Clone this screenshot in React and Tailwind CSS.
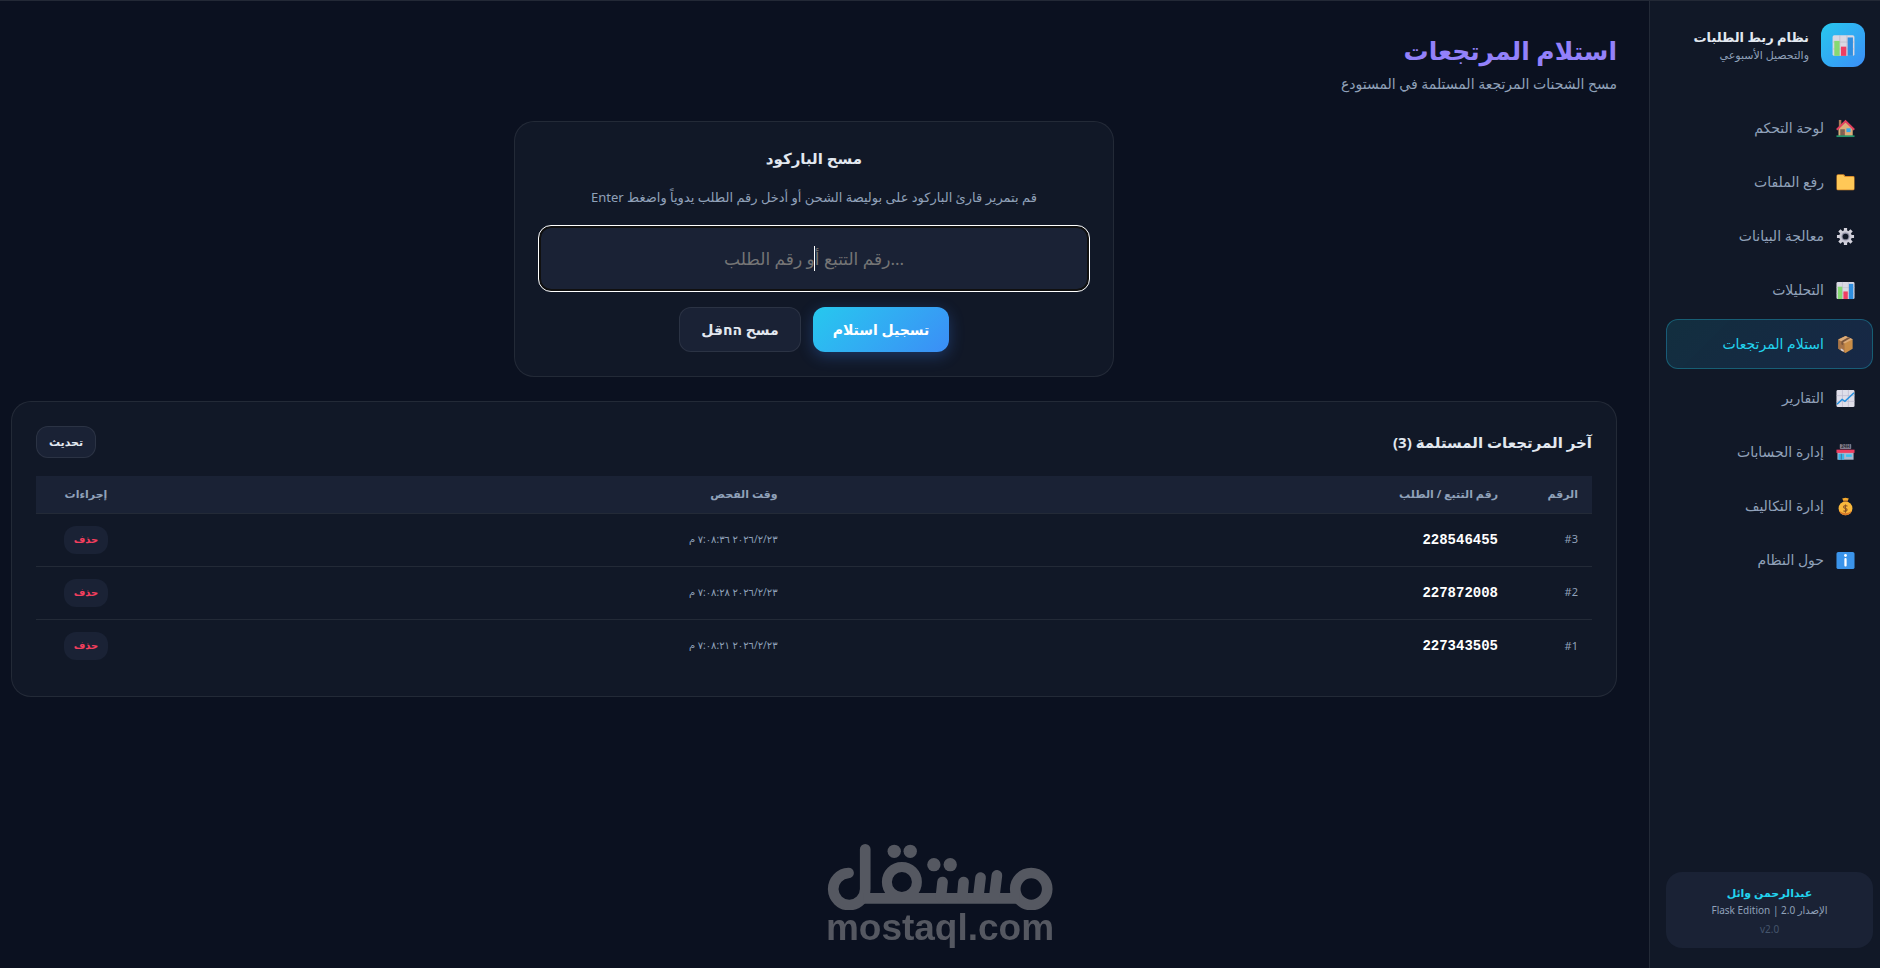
import React, { useState } from "react";

const scans = [
  { id: 3, code: "228546455", time: "٢٣‏/٢‏/٢٠٢٦ ٧:٠٨:٣٦ م" },
  { id: 2, code: "227872008", time: "٢٣‏/٢‏/٢٠٢٦ ٧:٠٨:٢٨ م" },
  { id: 1, code: "227343505", time: "٢٣‏/٢‏/٢٠٢٦ ٧:٠٨:٢١ م" },
];

function Icon({ children, className = "size-[19px]" }) {
  return (
    <svg viewBox="0 0 20 20" className={`${className} shrink-0`} aria-hidden="true">
      {children}
    </svg>
  );
}

function ChartIcon({ className }) {
  return (
    <Icon className={className}>
      <rect x="0.5" y="1" width="19" height="18" rx="1.5" fill="#d9d8e3" />
      <path d="M6.8 1v18M13 1v18M.5 7h19M.5 13h19" stroke="#bab8c9" strokeWidth="0.6" />
      <rect x="2" y="6" width="4.6" height="13" fill="#86d972" />
      <rect x="7.8" y="11" width="4.6" height="8" fill="#ef3e63" />
      <rect x="13.6" y="3" width="4.6" height="16" fill="#2f8fe0" />
    </Icon>
  );
}

function HouseIcon() {
  return (
    <Icon>
      <rect x="3" y="1" width="2.6" height="7" fill="#a97b55" />
      <path d="M2.6 10 10 3.2 17.6 10V18H2.6z" fill="#dcae7a" />
      <path d="M.8 11.3 10 2.2l9.2 9.1" fill="none" stroke="#e33f5f" strokeWidth="2.1" />
      <rect x="4.5" y="10.8" width="4.8" height="7.2" fill="#7c6353" />
      <rect x="11" y="9.8" width="4.4" height="4" fill="#35a9ea" />
      <rect x="0.5" y="17.2" width="19" height="1.8" fill="#23936b" />
      <circle cx="8.3" cy="14.5" r="0.6" fill="#e9434f" />
    </Icon>
  );
}

function FolderIcon() {
  return (
    <Icon>
      <path d="M.5 3q0-1.8 1.6-1.8h5.6q1 0 1.6 1.2l.4.7H18q1.5 0 1.5 1.5v12q0 1.6-1.5 1.6H2q-1.5 0-1.5-1.6z" fill="#d98b2b" />
      <path d="M1 3.4q0-1.2 1.2-1.2h5.3l1.6 2H18q1 0 1 1v11q0 1.2-1.2 1.2H2.2Q1 17.4 1 16.2z" fill="#ffc857" />
    </Icon>
  );
}

function GearIcon() {
  return (
    <Icon>
      <path d="M10 1v18M1 10h18M3.6 3.6l12.8 12.8M16.4 3.6 3.6 16.4" stroke="#d3d2dc" strokeWidth="3.4" />
      <circle cx="10" cy="10" r="6.6" fill="#cbcad6" />
      <circle cx="10" cy="10" r="4.2" fill="#8f8fa4" />
      <circle cx="10" cy="10" r="3" fill="#111827" />
    </Icon>
  );
}

function BoxIcon() {
  return (
    <Icon>
      <path d="M10 1 17.5 4.5v10L10 19l-7.5-4.5v-10z" fill="#c98d47" />
      <path d="M10 1 17.5 4.5 9 9 2.5 5z" fill="#dcab78" />
      <path d="M2.5 5 9 9v9.4l-6.5-3.9z" fill="#a87447" />
      <path d="M12.8 2.3 5.6 6.6v3.2l2 1.1V7.7l7.3-4.3z" fill="#7b563b" />
      <path d="m5 14 3 1.7v2L5 16z" fill="#d8d5df" />
    </Icon>
  );
}

function TrendIcon() {
  return (
    <Icon>
      <rect x="0.5" y="1" width="19" height="18" rx="1.5" fill="#dfdee9" />
      <path d="M6.8 1v18M13 1v18M.5 7h19M.5 13h19" stroke="#b9b7cb" strokeWidth="0.7" />
      <path d="M1 16 6.4 11l3 2L19 4" fill="none" stroke="#2590df" strokeWidth="1.6" />
    </Icon>
  );
}

function StoreIcon() {
  return (
    <Icon>
      <rect x="4" y="1" width="12" height="5.4" rx="0.8" fill="#7d7b8c" />
      <text x="10" y="5.3" textAnchor="middle" fill="#26262f" className="font-['Liberation_Sans'] text-[5px] font-bold">24H</text>
      <rect x="1.5" y="9" width="17" height="8.6" fill="#a9b7cc" />
      <rect x="0.5" y="7" width="19" height="3.4" fill="#ee3d60" />
      <rect x="2.6" y="11.4" width="6" height="6.2" fill="#38b3e8" />
      <path d="M5.6 11.4v6.200" stroke="#53607a" strokeWidth="0.8" />
      <rect x="10.6" y="12" width="6" height="2.6" fill="#38c0f0" />
    </Icon>
  );
}

function MoneyIcon() {
  return (
    <Icon>
      <path d="M6.5 1.5 10 .8l3.5.7-1.6 3.2H8.1z" fill="#f5a92e" />
      <circle cx="10" cy="12" r="7.3" fill="#fab83c" />
      <path d="M3.2 14.5a7.3 7.3 0 0 0 13.6 0q-3 2.500-6.800 2.500t-6.800-2.500" fill="#d97a2a" />
      <rect x="7.500" y="3.600" width="5" height="1.400" rx="0.700" fill="#a4612a" />
      <path d="M12 9.700q-2-1.200-3.400-.2t.2 2.200l2 .7q1.600.9.300 2.100-1.500 1-3.300-.1M10 8v8.500" fill="none" stroke="#8a5426" strokeWidth="1.100" />
    </Icon>
  );
}

function InfoIcon() {
  return (
    <Icon>
      <rect x="0.5" y="1" width="19" height="18" rx="2" fill="#3b94ea" />
      <circle cx="10" cy="4.7" r="1.5" fill="#fff" />
      <rect x="8.8" y="7.3" width="2.4" height="9" rx="1" fill="#fff" />
    </Icon>
  );
}

const navItems = [
  { label: "لوحة التحكم", icon: HouseIcon },
  { label: "رفع الملفات", icon: FolderIcon },
  { label: "معالجة البيانات", icon: GearIcon },
  { label: "التحليلات", icon: ChartIcon },
  { label: "استلام المرتجعات", icon: BoxIcon, active: true },
  { label: "التقارير", icon: TrendIcon },
  { label: "إدارة الحسابات", icon: StoreIcon },
  { label: "إدارة التكاليف", icon: MoneyIcon },
  { label: "حول النظام", icon: InfoIcon },
];

function Sidebar() {
  return (
    <aside className="flex w-[231px] shrink-0 flex-col border-l border-white/8 bg-[#111827] pt-[22px] pr-[7px] pb-5 pl-4">
      <div className="flex items-center gap-3 pr-2">
        <div className="flex size-11 items-center justify-center rounded-xl bg-linear-135 from-[#26c8ee] to-[#3b8df6]">
          <ChartIcon className="size-[23px]" />
        </div>
        <div>
          <div className="text-[13px] leading-5 font-bold text-slate-200">نظام ربط الطلبات</div>
          <div className="text-[11px] leading-4 text-slate-400">والتحصيل الأسبوعي</div>
        </div>
      </div>

      <nav className="mt-9 flex flex-col gap-1">
        {navItems.map(({ label, icon: NavIcon, active }) => (
          <a
            key={label}
            href="#"
            className={`flex h-[50px] items-center gap-3 rounded-xl border px-[17px] text-sm ${
              active
                ? "border-[#22d3ee]/30 bg-linear-135 from-[#22d3ee]/12 to-[#3b82f6]/15 text-[#22d3ee]"
                : "border-transparent text-slate-400"
            }`}
          >
            <NavIcon />
            {label}
          </a>
        ))}
      </nav>

      <div className="mt-auto flex h-[76px] flex-col items-center justify-center rounded-2xl bg-[#1a2235] text-[10px]">
        <div className="text-[11px] leading-5 font-bold text-[#22d3ee]">عبدالرحمن وائل</div>
        <div className="leading-[14px] text-slate-400">الإصدار 2.0 | Flask Edition</div>
        <div className="mt-1 leading-4 text-slate-600">v2.0</div>
      </div>
    </aside>
  );
}

function ScanCard() {
  const [code, setCode] = useState("");

  return (
    <section className="mx-auto w-full max-w-[600px] rounded-[20px] border border-white/8 bg-[#111827] p-6 text-center">
      <h2 className="text-[15px] leading-6 font-bold text-slate-200">مسح الباركود</h2>
      <label htmlFor="barcode" className="mt-4 block text-[13px] leading-[22px] text-slate-400">
        قم بتمرير قارئ الباركود على بوليصة الشحن أو أدخل رقم الطلب يدوياً واضغط Enter
      </label>
      <div className="relative mt-[18px]">
        <input
          id="barcode"
          dir="ltr"
          value={code}
          onChange={(e) => setCode(e.target.value)}
          placeholder="رقم التتبع أو رقم الطلب..."
          className="block h-[65px] w-full rounded-xl border-2 border-[#101010] bg-[#1a2235] text-center text-[17px] text-slate-100 caret-transparent outline-1 outline-white placeholder:text-[#757575]"
        />
        <span className="absolute top-5 left-1/2 h-[25px] w-px bg-white" />
      </div>
      <div className="mt-4 flex justify-center gap-3 text-sm font-bold">
        <button className="h-[45px] w-[136px] rounded-xl bg-linear-135 from-[#26c8ee] to-[#3b8df6] text-white shadow-[0_4px_15px_rgba(59,130,246,0.3)]">
          تسجيل استلام
        </button>
        <button onClick={() => setCode("")} className="h-[45px] w-[122px] rounded-xl border border-white/8 bg-[#1a2235] text-slate-200">
          مسح החقل
        </button>
      </div>
    </section>
  );
}

function ScanTable() {
  return (
    <section className="mt-6 rounded-[20px] border border-white/8 bg-[#111827] p-6">
      <div className="mb-[18px] flex items-center justify-between">
        <h2 className="text-[15px] leading-6 font-bold text-slate-200">آخر المرتجعات المستلمة (3)</h2>
        <button className="h-8 w-[60px] rounded-xl border border-white/8 bg-[#1a2235] text-[11px] font-bold text-slate-200">تحديث</button>
      </div>
      <table className="w-full table-fixed text-right text-[11px] text-slate-400">
        <thead>
          <tr className="h-[37px] border-b border-white/8 bg-[#1a2235]">
            <th className="w-20 px-3.5">الرقم</th>
            <th className="w-[46.3%] px-3.5">رقم التتبع / الطلب</th>
            <th className="px-3.5">وقت الفحص</th>
            <th className="w-[100px] text-center">إجراءات</th>
          </tr>
        </thead>
        <tbody>
          {scans.map((scan) => (
            <tr key={scan.id} className="h-[53px] border-b border-white/8 last:border-b-0">
              <td className="px-3.5"><bdi dir="ltr">#{scan.id}</bdi></td>
              <td className="px-3.5 font-['Liberation_Mono',monospace] text-sm font-bold text-white">{scan.code}</td>
              <td className="px-3.5 text-[10px]">{scan.time}</td>
              <td className="text-center">
                <button className="h-7 w-11 rounded-xl bg-[#1a2235] text-[10px] font-bold text-[#f43f5e]">حذف</button>
              </td>
            </tr>
          ))}
        </tbody>
      </table>
    </section>
  );
}

function Watermark() {
  return (
    <div dir="ltr" className="pointer-events-none fixed bottom-[22px] left-1/2 flex -translate-x-1/2 flex-col items-center text-[#555861]">
      <svg viewBox="51 45 678 198" className="h-[66px] w-[226px]" fill="none" stroke="currentColor" strokeLinecap="round" aria-hidden="true">
        <circle cx="664" cy="180" r="48" strokeWidth="32" />
        <circle cx="276" cy="159" r="45" strokeWidth="30" />
        <path d="M116 132A48 48 0 1 0 166 180V61" strokeWidth="32" />
        <path d="M162 208H628" strokeWidth="32" strokeLinecap="butt" />
        <path d="M398 159 393 205M461 159 457 205M512 146 505 205M561 139 553 205" strokeWidth="32" />
        <g fill="currentColor" stroke="none">
          <circle cx="253" cy="67" r="20" />
          <circle cx="301" cy="67" r="20" />
          <circle cx="372" cy="107" r="20" />
          <circle cx="421" cy="107" r="20" />
        </g>
      </svg>
      <div className="font-['Liberation_Sans',sans-serif] text-[37px] leading-9 font-bold">mostaql.com</div>
    </div>
  );
}

export default function App() {
  return (
    <div dir="rtl" className="flex min-h-screen border-t border-white/10 bg-[#0b1120] font-['Noto_Sans','DejaVu_Sans',sans-serif]">
      <Sidebar />
      <main className="min-w-0 flex-1 pt-8 pr-8 pl-[11px]">
        <header className="mb-[26px]">
          <h1 className="text-[25px] leading-[34px] font-bold text-[#9381fa]">استلام المرتجعات</h1>
          <p className="mt-1.5 text-sm leading-[22px] text-slate-400">مسح الشحنات المرتجعة المستلمة في المستودع</p>
        </header>
        <ScanCard />
        <ScanTable />
      </main>
      <Watermark />
    </div>
  );
}
